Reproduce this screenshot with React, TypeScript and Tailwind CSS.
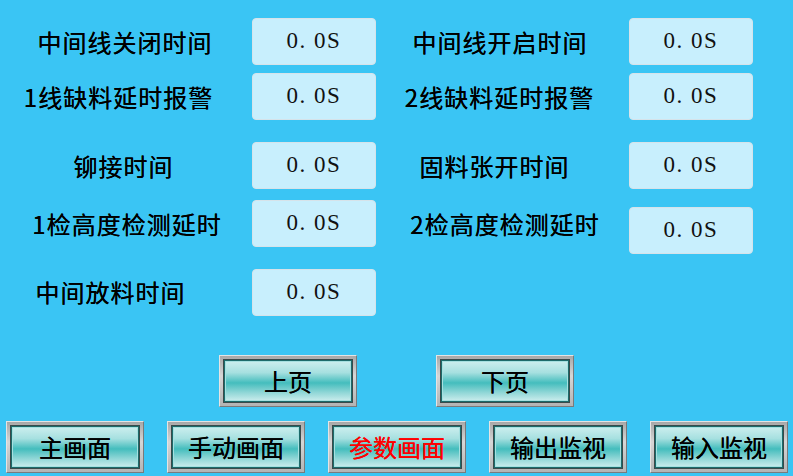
import React from "react";

const cjk = { fontFamily: '"Noto Sans CJK SC", "Noto Sans", sans-serif' };
const serif = { fontFamily: '"Liberation Serif", "DejaVu Serif", serif' };

function ValueBox({ className = "" }: { className?: string }) {
  return (
    <div
      className={`w-[124px] h-[47px] shrink-0 rounded-[4px] border border-[#d6e3ea] bg-[#c8effd] flex items-center justify-center text-[23px] tracking-[1.5px] text-[#111] ${className}`}
      style={serif}
    >
      0. 0S
    </div>
  );
}

function Label({ text, className = "" }: { text: string; className?: string }) {
  return (
    <div
      className={`h-[47px] flex items-center justify-center text-[24px] tracking-[1px] text-black leading-none whitespace-nowrap [text-shadow:0_0_0.5px_#000] ${className}`}
      style={cjk}
    >
      {text}
    </div>
  );
}

function PanelButton({ text, red = false }: { text: string; red?: boolean }) {
  return (
    <div className="w-[138px] h-[52px] shrink-0 border border-t-[#e4e4e4] border-l-[#e4e4e4] border-b-[#7a7a7a] border-r-[#7a7a7a] bg-[linear-gradient(to_bottom,#a8a8a8,#d6d6d6_40%,#b4b4b4)] p-[3px]">
      <div className="h-full border border-[#3a4a4a] p-[1px] bg-[#1d6b6b]">
        <div
          className={`h-full flex items-center justify-center border border-[#a6e0e0] bg-[linear-gradient(to_bottom,#c9eded_0%,#a6e0e0_28%,#44bdbd_55%,#8fd6d6_80%,#c4eaea_100%)] text-[24px] leading-none [text-shadow:0_0_0.5px_currentColor] ${red ? "text-[#ff0000]" : "text-black"}`}
          style={cjk}
        >
          {text}
        </div>
      </div>
    </div>
  );
}

export default function App() {
  return (
    <div className="w-[793px] h-[476px] bg-[#3ac5f4] overflow-hidden flex flex-col pt-[18px]">
      {/* row 1 */}
      <div className="flex items-center h-[47px]">
        <Label text="中间线关闭时间" className="w-[252px] pr-[2px]" />
        <ValueBox />
        <Label text="中间线开启时间" className="w-[253px] pr-[5px]" />
        <ValueBox />
      </div>
      {/* row 2 */}
      <div className="flex items-center h-[47px] mt-[8px]">
        <Label text="1线缺料延时报警" className="w-[252px] pr-[15px]" />
        <ValueBox />
        <Label text="2线缺料延时报警" className="w-[253px] pr-[6px]" />
        <ValueBox />
      </div>
      {/* row 3 */}
      <div className="flex items-center h-[47px] mt-[22px]">
        <Label text="铆接时间" className="w-[252px] pr-[5px]" />
        <ValueBox />
        <Label text="固料张开时间" className="w-[253px] pr-[16px]" />
        <ValueBox />
      </div>
      {/* row 4 */}
      <div className="flex items-start h-[54px] mt-[11px]">
        <Label text="1检高度检测延时" className="w-[252px] pl-[2px] h-[43px]" />
        <ValueBox />
        <Label text="2检高度检测延时" className="w-[253px] pl-[5px] h-[43px]" />
        <ValueBox className="mt-[7px]" />
      </div>
      {/* row 5 */}
      <div className="flex items-center h-[47px] mt-[15px]">
        <Label text="中间放料时间" className="w-[252px] pr-[31px] pb-[2px]" />
        <ValueBox />
      </div>

      {/* paging */}
      <div className="flex mt-[39px] pl-[219px] gap-[79px]">
        <PanelButton text="上页" />
        <PanelButton text="下页" />
      </div>

      {/* navigation */}
      <div className="flex mt-[14px] pl-[6px] gap-[23px]">
        <PanelButton text="主画面" />
        <PanelButton text="手动画面" />
        <PanelButton text="参数画面" red />
        <PanelButton text="输出监视" />
        <PanelButton text="输入监视" />
      </div>
    </div>
  );
}
